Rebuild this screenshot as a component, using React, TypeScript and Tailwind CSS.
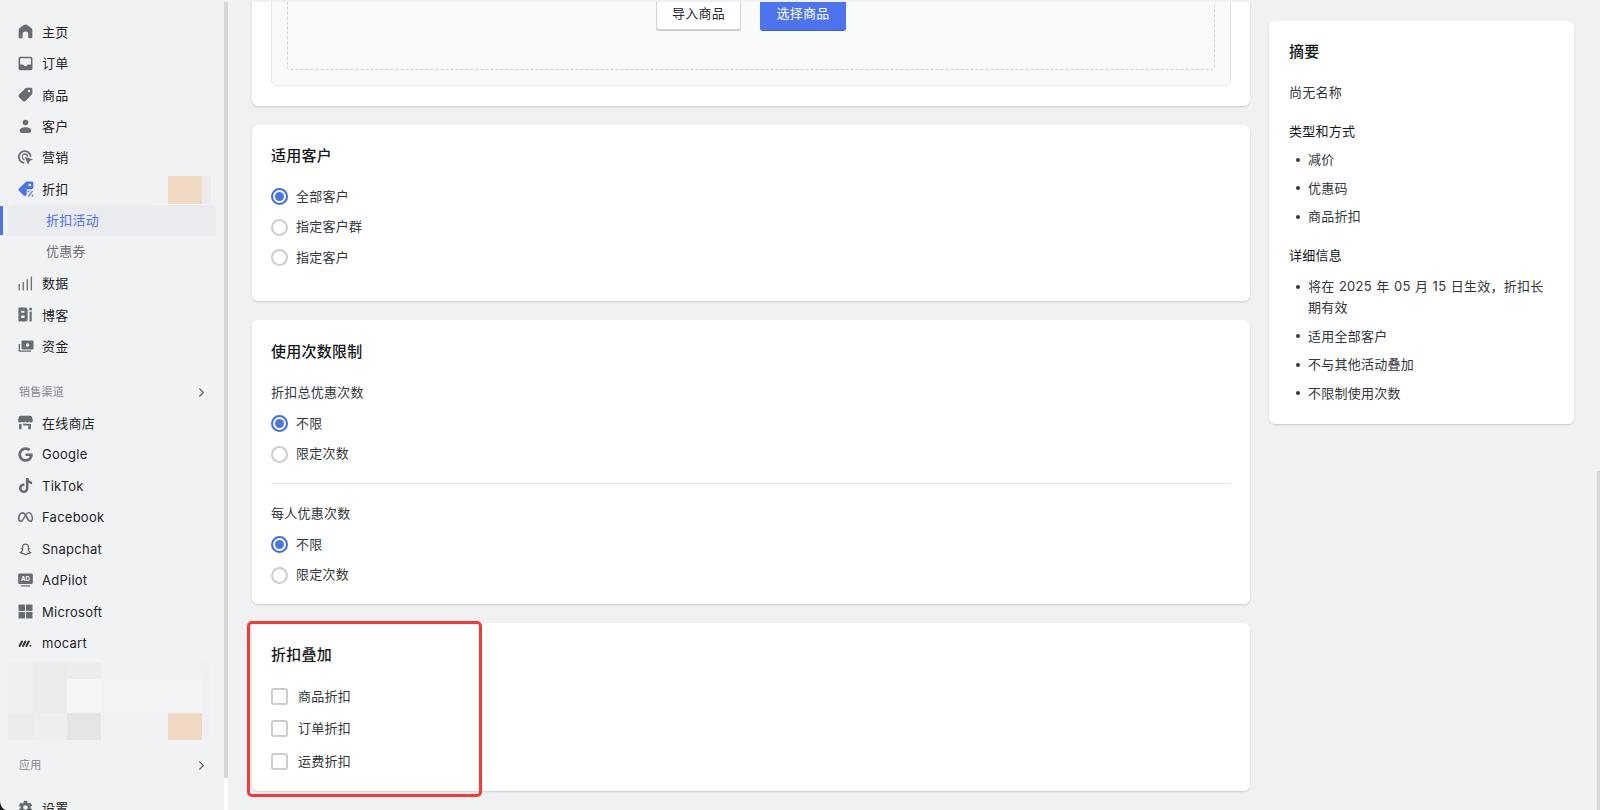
import React from "react";
import { ChevronRight } from "lucide-react";
import { FaGoogle, FaTiktok } from "react-icons/fa";
import { RiSnapchatLine } from "react-icons/ri";
import { SiMeta } from "react-icons/si";
import { IoSettingsSharp } from "react-icons/io5";

const Svg = ({ children, cls = "text-[#686c73]" }: { children: React.ReactNode; cls?: string }) => (
  <svg viewBox="0 0 14 14" width="15" height="15" fill="currentColor" className={cls}>{children}</svg>
);

const icons: Record<string, React.ReactNode> = {
  home: <Svg><path d="M7 .4C6.4.4 5.9.7 5.4 1L1.600 3.800C.9 4.300.6 5 .6 5.800v6.400c0 .7.5 1.200 1.200 1.200h2.600V9.600a2.600 2.600 0 0 1 5.200 0v3.800h2.600c.7 0 1.200-.5 1.200-1.200V5.800c0-.8-.3-1.500-1-2L8.600 1C8.100.7 7.600.4 7 .4z" /></Svg>,
  inbox: <Svg><path fillRule="evenodd" d="M2.400.6h9.200c1.100 0 1.900.8 1.900 1.900v9c0 1.100-.8 1.900-1.900 1.900H2.400C1.300 13.400.5 12.600.5 11.500v-9C.5 1.400 1.300.6 2.400.6zm0 1.500c-.3 0-.4.2-.4.4V8h2.400c.4 0 .7.2.9.5l.5.8h2.400l.5-.8c.2-.3.5-.5.9-.5H12V2.500c0-.2-.2-.4-.4-.4H2.400z" /></Svg>,
  tag: <Svg><path fillRule="evenodd" d="M8.200.6h3.900c.7 0 1.300.6 1.300 1.300v3.900c0 .5-.2.9-.5 1.200L7 13c-.7.7-1.800.7-2.500 0L1 9.500C.3 8.800.3 7.700 1 7L7 1.100C7.300.8 7.700.6 8.200.6zM10.300 2.500a1.200 1.200 0 1 0 0 2.400 1.200 1.200 0 0 0 0-2.400z" /></Svg>,
  person: <Svg><circle cx="7" cy="3.300" r="2.600" /><path d="M7 7.800c3 0 5.400 1.100 5.400 3.100 0 1.500-1.200 2.200-2.800 2.200H4.400C2.800 13.100 1.600 12.400 1.600 10.900c0-2 2.400-3.100 5.400-3.100z" /></Svg>,
  marketing: (
    <Svg>
      <path d="M6.300.2a6.300 6.300 0 0 1 6.300 6h-1.600a4.700 4.700 0 1 0-5.300 5l.5 1.600A6.300 6.300 0 0 1 6.300.2z" />
      <path d="M6.300 3a3.400 3.400 0 0 1 3.400 3H8.200a1.900 1.900 0 1 0-2.300 2.200l.5 1.500A3.400 3.400 0 0 1 6.300 3z" />
      <path d="M6.200 6.200l7.800 2.600-3.100 1.500-1.500 3.500z" />
    </Svg>
  ),
  discount: (
    <svg viewBox="0 0 14 14" width="16" height="16" className="text-[#4c74e9]" fill="currentColor">
      <path fillRule="evenodd" d="M8 .4h4.100c.8 0 1.400.6 1.400 1.400v3.600c0 .5-.2.9-.5 1.200L7.200 12.500c-.7.7-1.800.7-2.500 0L1 8.800C.3 8.100.3 7 1 6.300L6.800.9C7.100.6 7.500.4 8 .4zM10.300 2.300a1.200 1.200 0 1 0 0 2.400 1.200 1.200 0 0 0 0-2.400z" />
      <rect x="7.600" y="7.300" width="6.400" height="6.700" fill="#f1f2f4" />
      <path d="M9 13.600l3.800-5" stroke="currentColor" strokeWidth="1" />
      <circle cx="9.200" cy="9.100" r=".8" /><circle cx="12.700" cy="12.800" r=".8" />
    </svg>
  ),
  data: <Svg><rect x=".5" y="7.500" width="1.200" height="6" /><rect x="4.300" y="5.500" width="1.200" height="8" /><rect x="8.100" y="3" width="1.200" height="10.500" /><rect x="11.900" y=".5" width="1.200" height="13" /></Svg>,
  blog: <Svg><path fillRule="evenodd" d="M.4 1.400C.4.900.8.500 1.300.500h5.400c1.300 0 2.300 1 2.300 2.300v8.600c0 1.200-1 2.100-2.200 2.100H1.300c-.5 0-.9-.4-.9-.9V1.400zM3 3.400v1.900h3V3.400H3zM3 8v2.200h3.100V8H3z" /><circle cx="11.800" cy="1.900" r="1.400" /><rect x="10.800" y="4.300" width="2" height="9.200" rx=".6" /></Svg>,
  funds: (
    <svg viewBox="0 0 16 14" width="16" height="14" fill="currentColor" className="text-[#686c73]">
      <path fillRule="evenodd" d="M4.500 1.500h10c.6 0 1 .4 1 1v7c0 .6-.4 1-1 1h-10c-.6 0-1-.4-1-1v-7c0-.6.4-1 1-1zM9.500 4.300a1.700 1.700 0 1 0 0 3.400 1.700 1.700 0 0 0 0-3.400z" />
      <path d="M.6 5h1.400v6.200c0 .2.100.3.300.3H13v1.300H2c-.8 0-1.400-.6-1.400-1.400V5z" />
    </svg>
  ),
  store: <Svg><path d="M2.300.8h9.400c.5 0 .9.300 1.100.7l1 3v.8c0 1-.8 1.700-1.800 1.700-.8 0-1.400-.4-1.700-1-.3.600-1 1-1.700 1S7.300 6.600 7 6c-.3.600-1 1-1.700 1s-1.400-.4-1.700-1c-.3.600-.9 1-1.700 1C.9 7 .1 6.300.1 5.300v-.8l1-3c.2-.4.7-.7 1.200-.7z" /><path d="M1 8.200c.4.100.7.200 1 .2.500 0 1-.1 1.300-.3v5.300H2c-.6 0-1-.4-1-1V8.200zM4.800 8.200c.4.100 1 .1 1.400 0 .3-.1.600-.2.800-.3.500.3 1.300.5 2 .4.300 0 .5-.1.800-.2.300.2.800.3 1.200.3.400 0 .7-.1 1-.2v4.200c0 .6-.4 1-1 1h-1.400V9.800H4.800v3.600z" /></Svg>,
  ad: (
    <svg viewBox="0 0 15 14" width="15" height="14" className="text-[#686c73]">
      <rect x=".2" y=".5" width="14.600" height="10.500" rx="1.200" fill="currentColor" />
      <rect x="3" y="12.300" width="9" height="1.200" fill="currentColor" />
      <text x="7.500" y="8" textAnchor="middle" fontSize="6" fontWeight="700" letterSpacing="0" fill="#fff" fontFamily="Inter, sans-serif">AD</text>
    </svg>
  ),
  ms: <Svg><rect x=".5" y=".5" width="6" height="6" /><rect x="7.500" y=".5" width="6" height="6" /><rect x=".5" y="7.500" width="6" height="6" /><rect x="7.500" y="7.500" width="6" height="6" /></Svg>,
  mocart: (
    <svg viewBox="0 0 14 14" width="14" height="14" fill="none" stroke="#33363b" strokeWidth="2" strokeLinecap="round">
      <path d="M1.600 10l2.400-4.500M5 10l2.400-4.500M8.400 10l2.400-4.500" /><circle cx="12.300" cy="9.700" r=".9" fill="#33363b" stroke="none" />
    </svg>
  ),
};

const glyph = (c: React.ReactNode) => <span className="flex h-[14px] w-[15px] items-center justify-center text-[#686c73]">{c}</span>;

const NavRow = ({ icon, label }: { icon: React.ReactNode; label: string }) => (
  <div className="flex h-[31.45px] items-center pl-[18px]">
    <span className="flex w-[24px] items-center">{icon}</span>
    <span className="text-[13px] leading-[20px] text-[#1f2329]">{label}</span>
  </div>
);

const SubRow = ({ label }: { label: string }) => (
  <div className="flex h-[31.45px] items-center pl-[46px] text-[13px] text-[#6b6f76]">{label}</div>
);

const Section = ({ label }: { label: string }) => (
  <div className="flex h-[31.45px] items-center justify-between pl-[19px] pr-[15px] text-[11px] text-[#85888e]">
    <span>{label}</span>
    <ChevronRight size={15} strokeWidth={1.7} className="text-[#5f6369]" />
  </div>
);

const Mosaic = ({ h, cells }: { h: string; cells: [string, string][] }) => (
  <div className={`flex ${h}`}>
    {cells.map(([w, bg], i) => (
      <div key={i} style={{ width: w, background: bg }} />
    ))}
  </div>
);

const Radio = ({ on, label }: { on?: boolean; label: string }) => (
  <label className="flex h-[30.75px] items-center">
    {on ? (
      <span className="flex h-[17px] w-[17px] items-center justify-center rounded-full border-2 border-[#3f6df0] bg-white">
        <span className="h-[9px] w-[9px] rounded-full bg-[#4c74e9]" />
      </span>
    ) : (
      <span className="h-[17px] w-[17px] rounded-full border-2 border-[#cbcdd0] bg-white" />
    )}
    <span className="ml-[8px] text-[13px] text-[#33363b]">{label}</span>
  </label>
);

const Check = ({ label }: { label: string }) => (
  <label className="flex h-[32.5px] items-center">
    <span className="h-[17px] w-[17px] rounded-[3px] border-2 border-[#cbcdd0] bg-white" />
    <span className="ml-[10px] text-[13px] text-[#33363b]">{label}</span>
  </label>
);

const cardCls = "rounded-[6px] bg-white shadow-[0_1px_2px_rgba(0,0,0,0.16)]";
const Heading = ({ children }: { children: React.ReactNode }) => (
  <h2 className="text-[15px] font-medium leading-[22px] text-[#14171a]">{children}</h2>
);

const Bullets = ({ items }: { items: string[] }) => (
  <ul className="flex flex-col gap-[7.5px] pl-[19px] text-[13px] leading-[21px] text-[#33363b] [word-spacing:0.5px]">
    {items.map((t) => (
      <li key={t} className="relative before:absolute before:left-[-12px] before:top-[8.5px] before:h-[4px] before:w-[4px] before:rounded-full before:bg-[#33363b]">{t}</li>
    ))}
  </ul>
);

export default function App() {
  return (
    <div className="relative flex h-[810px] w-[1600px] overflow-hidden bg-[#f0f1f3] font-['Inter','Noto_Sans_CJK_SC',sans-serif] tracking-[0.25px]">
      {/* sidebar */}
      <aside className="relative h-full w-[224px] shrink-0 overflow-hidden bg-[#f1f2f4] pt-[16px]">
        <NavRow icon={icons.home} label="主页" />
        <NavRow icon={icons.inbox} label="订单" />
        <NavRow icon={icons.tag} label="商品" />
        <NavRow icon={icons.person} label="客户" />
        <NavRow icon={icons.marketing} label="营销" />
        <div className="relative">
          <div className="absolute left-[150px] top-[3px] flex h-[28px]">
            <div className="w-[18px] bg-[#f1f1f1]" />
            <div className="w-[34px] bg-[#f0d9c2]" />
            <div className="w-[9px] bg-[#ecebe9]" />
          </div>
          <NavRow icon={icons.discount} label="折扣" />
        </div>
        <div className="relative">
          <div className="absolute left-0 top-[1px] h-[29px] w-[3px] bg-[#4c74e9]" />
          <div className="mx-[8px] flex h-[31.45px] items-center rounded-[4px] bg-[#e9ebef] pl-[38px] text-[13px] text-[#4c74e9]">折扣活动</div>
        </div>
        <SubRow label="优惠券" />
        <NavRow icon={icons.data} label="数据" />
        <NavRow icon={icons.blog} label="博客" />
        <NavRow icon={icons.funds} label="资金" />
        <div className="mb-[-1px] mt-[15px]"><Section label="销售渠道" /></div>
        <NavRow icon={icons.store} label="在线商店" />
        <NavRow icon={glyph(<FaGoogle size={15} />)} label="Google" />
        <NavRow icon={glyph(<FaTiktok size={15} />)} label="TikTok" />
        <NavRow icon={glyph(<SiMeta size={16} />)} label="Facebook" />
        <NavRow icon={glyph(<RiSnapchatLine size={20} />)} label="Snapchat" />
        <NavRow icon={icons.ad} label="AdPilot" />
        <NavRow icon={icons.ms} label="Microsoft" />
        <NavRow icon={icons.mocart} label="mocart" />
        <div className="ml-[8px] mt-[3px] w-[201px]">
          <Mosaic h="h-[17px]" cells={[["25px", "#eef0f1"], ["34px", "#e9ebed"], ["34px", "#ebecee"], ["101px", "#f0f1f3"], ["7px", "#eef0f2"]]} />
          <Mosaic h="h-[34px]" cells={[["25px", "#eff0f2"], ["34px", "#e9ebed"], ["34px", "#f4f5f6"], ["101px", "#f2f3f4"], ["7px", "#eef0f2"]]} />
          <Mosaic h="h-[27px]" cells={[["25px", "#e9ebec"], ["34px", "#eceeef"], ["34px", "#e3e5e7"], ["67px", "#f1f2f3"], ["34px", "#f0d9c2"], ["7px", "#eff0f1"]]} />
        </div>
        <div className="mb-[-1px] mt-[10px]"><Section label="应用" /></div>
        <div className="mt-[12px]">
          <NavRow icon={glyph(<IoSettingsSharp size={15} />)} label="设置" />
        </div>
      </aside>
      {/* sidebar scrollbar */}
      <div className="flex h-full w-[4px] shrink-0 flex-col bg-white">
        <div className="h-[778px] bg-[#d5d6d9]" />
      </div>
      {/* main */}
      <main className="flex min-w-0 flex-1 items-start pl-[24px]">
        <div className="-mt-[60px] flex w-[998px] shrink-0 flex-col gap-[19px]">
          <section className={`${cardCls} h-[166px] pl-[19px] pr-[19px] pt-[10px]`}>
            <div className="h-[136px] rounded-[6px] border border-[#e6e7e9] bg-[#f9fafa] p-[15px]">
              <div className="flex h-[104px] justify-center gap-[19px] rounded-[4px] border border-dashed border-[#cfd1d4] pt-[31px]">
                <button className="h-[32px] w-[85px] rounded-[3px] border border-[#d3d5d8] bg-white text-[13px] text-[#26292e] shadow-[0_1px_0_#c4c6ca]">导入商品</button>
                <button className="h-[32px] w-[86px] rounded-[3px] bg-[#4d74ee] text-[13px] text-white shadow-[0_1px_0_#3f63d0]">选择商品</button>
              </div>
            </div>
          </section>

          <section className={`${cardCls} h-[176px] px-[19px] pt-[20px]`}>
            <Heading>适用客户</Heading>
            <div className="mt-[14px] flex flex-col">
              <Radio on label="全部客户" />
              <Radio label="指定客户群" />
              <Radio label="指定客户" />
            </div>
          </section>

          <section className={`${cardCls} h-[284px] px-[19px] pt-[20.5px]`}>
            <Heading>使用次数限制</Heading>
            <p className="mt-[19.5px] text-[13px] leading-[20px] text-[#33363b]">折扣总优惠次数</p>
            <div className="mt-[6px] flex flex-col">
              <Radio on label="不限" />
              <Radio label="限定次数" />
            </div>
            <div className="mt-[13.5px] h-px bg-[#e4e5e7]" />
            <p className="mt-[19px] text-[13px] leading-[20px] text-[#33363b]">每人优惠次数</p>
            <div className="mt-[6px] flex flex-col">
              <Radio on label="不限" />
              <Radio label="限定次数" />
            </div>
          </section>

          <section className={`${cardCls} h-[168px] px-[19px] pt-[20.5px]`}>
            <Heading>折扣叠加</Heading>
            <div className="mt-[14.5px] flex flex-col">
              <Check label="商品折扣" />
              <Check label="订单折扣" />
              <Check label="运费折扣" />
            </div>
          </section>
        </div>

        <aside className={`${cardCls} ml-[19px] mt-[21px] h-[403px] w-[305px] shrink-0 pl-[20px] pr-[26px] pt-[20px]`}>
          <Heading>摘要</Heading>
          <p className="mt-[19px] text-[13px] leading-[21px] text-[#33363b]">尚无名称</p>
          <h3 className="mt-[18px] text-[13px] font-normal leading-[21px] text-[#14171a]">类型和方式</h3>
          <div className="mt-[7px]"><Bullets items={["减价", "优惠码", "商品折扣"]} /></div>
          <h3 className="mt-[17.500px] text-[13px] font-normal leading-[21px] text-[#14171a]">详细信息</h3>
          <div className="mt-[10.5px]">
            <Bullets items={["将在 2025 年 05 月 15 日生效，折扣长期有效", "适用全部客户", "不与其他活动叠加", "不限制使用次数"]} />
          </div>
        </aside>
      </main>

      {/* overlays */}
      <div className="absolute left-0 top-0 h-[2px] w-full bg-[#f0f1f2]" />
      <div className="absolute bottom-0 right-0 h-[339px] w-[3px] bg-[#d5d6d9]" />
      <div className="absolute left-[247px] top-[621px] h-[176px] w-[235px] rounded-[5px] border-[3px] border-[#f53a35]" />
      <svg className="absolute bottom-0 left-0" width="6" height="10" viewBox="0 0 6 10"><path d="M0 0C0 5 2 9 6 10H0z" fill="#1a1a1a" /></svg>
    </div>
  );
}
